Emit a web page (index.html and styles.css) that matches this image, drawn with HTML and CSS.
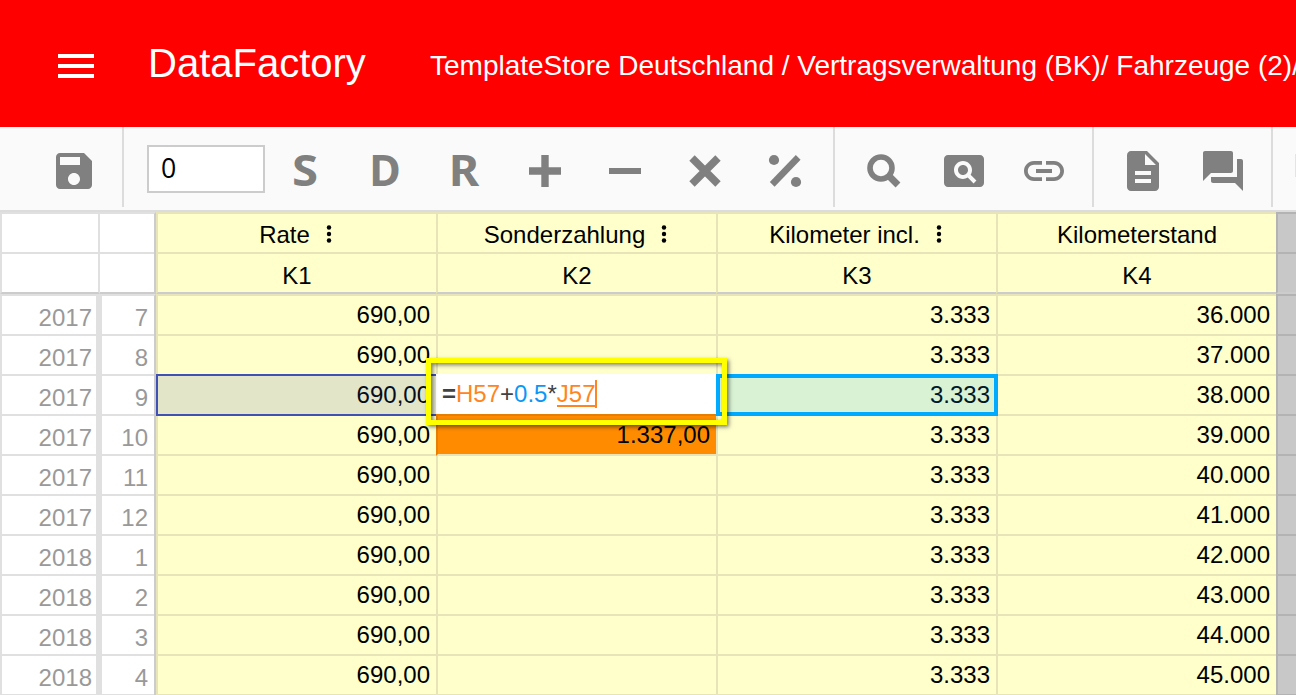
FILE: index.html
```html
<!DOCTYPE html>
<html lang="de">
<head>
<meta charset="utf-8">
<title>DataFactory</title>
<link rel="stylesheet" href="styles.css">
</head>
<body>
<div class="app">
  <header class="topbar">
    <div class="burger"><i></i><i></i><i></i></div>
    <div class="brand">DataFactory</div>
    <div class="crumbs">TemplateStore Deutschland / Vertragsverwaltung (BK)/ Fahrzeuge (2)/</div>
  </header>

  <nav class="toolbar">
    <div class="group group-file">
      <svg class="icon" viewBox="0 0 24 24"><path d="M17 3H5c-1.100 0-2 .9-2 2v14c0 1.100.9 2 2 2h14c1.100 0 2-.9 2-2V7l-4-4zm-5 16c-1.660 0-3-1.340-3-3s1.340-3 3-3 3 1.340 3 3-1.340 3-3 3zm3-10H5V5h10v4z"/></svg>
    </div>
    <div class="group group-calc">
      <div class="value">0</div>
      <div class="letter letter-s">S</div>
      <div class="letter">D</div>
      <div class="letter letter-r">R</div>
      <svg class="icon" viewBox="0 0 48 48"><path d="M20.300 8h7.400v12.300H40v7.400H27.700V40h-7.400V27.700H8v-7.400h12.300z"/></svg>
      <svg class="icon" viewBox="0 0 48 48"><path d="M8 21h32v6H8z"/></svg>
      <svg class="icon line" viewBox="0 0 48 48"><path stroke-width="7.600" d="M11 11l26 26M37 11L11 37"/></svg>
      <svg class="icon" viewBox="0 0 48 48"><circle cx="13" cy="13" r="5.100"/><circle cx="35" cy="35" r="5.100"/><path class="line" stroke-width="6.600" d="M11.200 37.400L37.200 10.400"/></svg>
    </div>
    <div class="group">
      <svg class="icon line" viewBox="0 0 48 48"><circle cx="21" cy="21" r="11" stroke-width="5.600"/><path stroke-width="6.800" d="M29 29l9 9"/></svg>
      <svg class="icon" viewBox="0 0 24 24"><path d="M11.500 9C10.120 9 9 10.120 9 11.500s1.120 2.500 2.500 2.500 2.500-1.120 2.500-2.500S12.880 9 11.500 9zM20 4H4c-1.100 0-2 .9-2 2v12c0 1.100.9 2 2 2h16c1.100 0 2-.9 2-2V6c0-1.100-.9-2-2-2zm-3.210 14.210l-2.910-2.910c-.69.44-1.510.7-2.390.7C9.010 16 7 13.990 7 11.500S9.010 7 11.500 7 16 9.010 16 11.500c0 .88-.26 1.690-.7 2.390l2.910 2.900-1.420 1.420z"/></svg>
      <svg class="icon" viewBox="0 0 24 24"><path d="M3.900 12c0-1.710 1.390-3.100 3.100-3.100h4V7H7c-2.760 0-5 2.240-5 5s2.240 5 5 5h4v-1.900H7c-1.710 0-3.100-1.390-3.100-3.100zM8 13h8v-2H8v2zm9-6h-4v1.900h4c1.710 0 3.100 1.390 3.100 3.100s-1.390 3.100-3.100 3.100h-4V17h4c2.760 0 5-2.240 5-5s-2.240-5-5-5z"/></svg>
    </div>
    <div class="group">
      <svg class="icon" viewBox="0 0 24 24"><path d="M14 2H6c-1.100 0-1.990.9-1.990 2L4 20c0 1.100.89 2 1.990 2H18c1.100 0 2-.9 2-2V8l-6-6zm2 16H8v-2h8v2zm0-4H8v-2h8v2zm-3-5V3.500L18.500 9H13z"/></svg>
      <svg class="icon" viewBox="0 0 24 24"><path d="M21 6h-2v9H6v2c0 .55.45 1 1 1h11l4 4V7c0-.55-.45-1-1-1zm-4 6V3c0-.55-.45-1-1-1H3c-.55 0-1 .45-1 1v14l4-4h10c.55 0 1-.45 1-1z"/></svg>
    </div>
    <div class="more"></div>
  </nav>

  <main class="sheet">
    <div class="row head first">
      <div class="year"></div><div class="month"></div>
      <div class="cell">Rate<svg class="dots" viewBox="0 0 12 24"><circle cx="6" cy="5.500" r="2.200"/><circle cx="6" cy="12" r="2.200"/><circle cx="6" cy="18.500" r="2.200"/></svg></div>
      <div class="cell">Sonderzahlung<svg class="dots" viewBox="0 0 12 24"><circle cx="6" cy="5.500" r="2.200"/><circle cx="6" cy="12" r="2.200"/><circle cx="6" cy="18.500" r="2.200"/></svg></div>
      <div class="cell">Kilometer incl.<svg class="dots" viewBox="0 0 12 24"><circle cx="6" cy="5.500" r="2.200"/><circle cx="6" cy="12" r="2.200"/><circle cx="6" cy="18.500" r="2.200"/></svg></div>
      <div class="cell plain">Kilometerstand</div>
      <div class="void"></div>
    </div>
    <div class="row head last">
      <div class="year"></div><div class="month"></div>
      <div class="cell">K1</div><div class="cell">K2</div><div class="cell">K3</div><div class="cell">K4</div>
      <div class="void"></div>
    </div>
    <div class="body">
      <div class="row"><div class="year">2017</div><div class="month">7</div><div class="cell">690,00</div><div class="cell"></div><div class="cell">3.333</div><div class="cell">36.000</div><div class="void"></div></div>
      <div class="row"><div class="year">2017</div><div class="month">8</div><div class="cell">690,00</div><div class="cell"></div><div class="cell">3.333</div><div class="cell">37.000</div><div class="void"></div></div>
      <div class="row"><div class="year">2017</div><div class="month">9</div><div class="cell">690,00<div class="mark mark-active"></div></div><div class="cell"><div class="editor"><b>=</b><span class="ref">H57</span>+<span class="num">0.5</span>*<span class="ref current">J57</span></div><div class="callout"></div></div><div class="cell">3.333<div class="mark mark-ref"></div></div><div class="cell">38.000</div><div class="void"></div></div>
      <div class="row"><div class="year">2017</div><div class="month">10</div><div class="cell">690,00</div><div class="cell filled">1.337,00</div><div class="cell">3.333</div><div class="cell">39.000</div><div class="void"></div></div>
      <div class="row"><div class="year">2017</div><div class="month">11</div><div class="cell">690,00</div><div class="cell"></div><div class="cell">3.333</div><div class="cell">40.000</div><div class="void"></div></div>
      <div class="row"><div class="year">2017</div><div class="month">12</div><div class="cell">690,00</div><div class="cell"></div><div class="cell">3.333</div><div class="cell">41.000</div><div class="void"></div></div>
      <div class="row"><div class="year">2018</div><div class="month">1</div><div class="cell">690,00</div><div class="cell"></div><div class="cell">3.333</div><div class="cell">42.000</div><div class="void"></div></div>
      <div class="row"><div class="year">2018</div><div class="month">2</div><div class="cell">690,00</div><div class="cell"></div><div class="cell">3.333</div><div class="cell">43.000</div><div class="void"></div></div>
      <div class="row"><div class="year">2018</div><div class="month">3</div><div class="cell">690,00</div><div class="cell"></div><div class="cell">3.333</div><div class="cell">44.000</div><div class="void"></div></div>
      <div class="row"><div class="year">2018</div><div class="month">4</div><div class="cell">690,00</div><div class="cell"></div><div class="cell">3.333</div><div class="cell">45.000</div><div class="void"></div></div>
    </div>
  </main>
</div>
</body>
</html>
```
FILE: styles.css
```css
* { box-sizing: border-box; }

body {
  margin: 0;
  overflow: hidden;
  font-family: "Liberation Sans", Arial, sans-serif;
  font-size: 24px;
  color: #000;
}

.app {
  width: 1296px;
  height: 695px;
  overflow: hidden;
  display: flex;
  flex-direction: column;
}

/* Header */
.topbar {
  flex: none;
  height: 127px;
  padding-left: 58px;
  display: flex;
  background: #f00;
  color: #fff;
  white-space: nowrap;
}
.burger {
  width: 36px;
  padding-top: 54px;
  display: flex;
  flex-direction: column;
  gap: 6px;
}
.burger i { height: 4px; background: #fff; }
.brand {
  flex: none;
  width: 282px;
  margin-left: 54px;
  padding-top: 40px;
  font-size: 40px;
  line-height: 46px;
}
.burger { flex: none; }
.crumbs { flex: none; padding-top: 50px; font-size: 28px; line-height: 32px; }

/* Toolbar */
.toolbar {
  flex: none;
  height: 85px;
  display: flex;
  align-items: flex-start;
  background: #fafafa;
  border-bottom: 2px solid #dcdcdc;
}
.group {
  height: 80px;
  padding: 20px 24px 0 25px;
  display: flex;
  gap: 32px;
  border-right: 2px solid #dcdcdc;
}
.group-file { padding-left: 50px; }
.group-calc { padding-left: 23px; }
.icon { width: 48px; height: 48px; fill: #808080; display: block; }
.line { fill: none; stroke: #808080; }
.value {
  width: 118px;
  height: 48px;
  margin: -2px -16px 0 0;
  padding-left: 12px;
  border: 2px solid #ccc;
  background: #fff;
  font: 26.700px/41px "Open Sans", sans-serif;
}
.letter {
  width: 48px;
  height: 48px;
  text-align: center;
  font: bold 43px/46px "Noto Sans", sans-serif;
  color: #808080;
}
.letter-s { transform: scaleX(1.1); }
.letter-r { transform: translateX(-1px) scaleX(1.08); }
.more { width: 1px; height: 23px; margin: 27px 0 0 22px; background: #ffe0b2; }

/* Sheet */
.row { display: flex; height: 40px; }
.year, .month {
  height: 40px;
  background: linear-gradient(#e0e0e0, #e0e0e0) 0 100% / 100% 2px no-repeat #fff;
  color: #999;
  text-align: right;
  line-height: 43px;
}
.year { width: 102px; padding-right: 4px; border-left: 2px solid #e0e0e0; border-right: 6px solid #e0e0e0; }
.month { width: 54px; padding-right: 6px; border-right: 2px solid #ccc; }
.cell {
  position: relative;
  width: 280px;
  height: 40px;
  padding-right: 6px;
  border-left: 2px solid #e6e4b8;
  border-bottom: 2px solid #e6e4b8;
  background: #ffc;
  text-align: right;
  line-height: 38px;
}
.void {
  width: 20px;
  background: #c8c8c8;
  border-left: 2px solid #b3b3b3;
  border-bottom: 2px solid #b3b3b3;
}

.head .year { width: 100px; border-right-width: 2px; }
.head .month { width: 56px; }
.head .cell {
  display: flex;
  justify-content: center;
  align-items: center;
  padding: 5px 0 0;
}
.first { height: 42px; }
.first > div { height: 42px; border-top: 2px solid #e6e4b8; }
.first .year, .first .month { border-top-color: #e0e0e0; }
.first .void { border-top-color: #b3b3b3; }
.head.first .cell { padding-top: 3px; }
.head.first .plain { padding-top: 4px; }
.last > .cell, .last > .void { border-bottom-color: #ccc; }
.last > .year, .last > .month { border-bottom: 2px solid #ccc; background: #fff; }
.dots { width: 12px; height: 24px; margin: -1px 0 0 13px; }

.body .row:first-child { height: 42px; }
.body .row:first-child > div { height: 42px; border-top: 2px solid #e6e4b8; }
.body .row:first-child > .year,
.body .row:first-child > .month { border-top-color: #e0e0e0; }
.body .row:first-child > .void { border-top-color: #b3b3b3; }

.cell.filled {
  border-left-color: #e67e00;
  background: #ff8c00;
}

/* Overlays on the edited row */
.mark { position: absolute; left: -2px; top: -2px; width: 282px; height: 42px; z-index: 1; }
.mark-active { border: 2px solid #3f51b5; background: rgba(63, 81, 181, .15); }
.mark-ref { border: 4px solid #00aaff; background: rgba(0, 170, 255, .15); }
.editor {
  position: absolute;
  left: -2px;
  top: -2px;
  width: 280px;
  height: 40px;
  padding-left: 6px;
  background: #fff;
  box-shadow: 0 2px #e67e00;
  color: #424242;
  text-align: left;
  line-height: 40px;
  z-index: 2;
}
.ref { color: #ff8522; }
.num { color: #0d96f6; }
.current {
  display: inline-block;
  height: 28px;
  line-height: 28px;
  border-right: 2px solid #ff8522;
  background: linear-gradient(#ff8522, #ff8522) 0 25px / 100% 2px no-repeat;
}
.callout {
  position: absolute;
  left: -12px;
  top: -18px;
  width: 301px;
  height: 67px;
  border: 5px solid #ff0;
  box-shadow: 2px 2px 4px rgba(0, 0, 0, .5), inset 2px 2px 4px rgba(0, 0, 0, .5);
  z-index: 3;
}
```
